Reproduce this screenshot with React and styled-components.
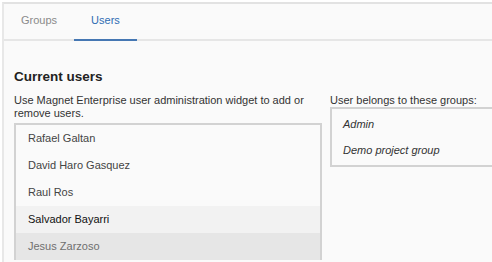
import styled, { createGlobalStyle } from 'styled-components';

const GlobalStyle = createGlobalStyle`
  body {
    margin: 0;
    background: #ffffff;
    font-family: 'Liberation Sans', Arial, sans-serif;
  }
`;

const users = [
  { id: 1, name: 'Rafael Galtan', state: 'normal' },
  { id: 2, name: 'David Haro Gasquez', state: 'normal' },
  { id: 3, name: 'Raul Ros', state: 'normal' },
  { id: 4, name: 'Salvador Bayarri', state: 'hover' },
  { id: 5, name: 'Jesus Zarzoso', state: 'selected' },
];

const groups = ['Admin', 'Demo project group'];

const rowStyles = {
  normal: { bg: '#fafafa', color: '#444444' },
  hover: { bg: '#f2f2f2', color: '#111111' },
  selected: { bg: '#e6e6e6', color: '#6f6f6f' },
};

export default function App() {
  return (
    <>
      <GlobalStyle />
      <MyFrame>
        <MyTabBar>
          <MyTab>Groups</MyTab>
          <MyTab active>Users</MyTab>
        </MyTabBar>
        <MyContent>
          <MyHeading>Current users</MyHeading>
          <MyColumns>
            <MyLeftColumn>
              <MyText>
                Use Magnet Enterprise user administration widget to add or remove users.
              </MyText>
              <MyList>
                {users.map((user) => (
                  <MyUserRow key={user.id} state={user.state}>
                    {user.name}
                  </MyUserRow>
                ))}
              </MyList>
            </MyLeftColumn>
            <MyRightColumn>
              <MyText>User belongs to these groups:</MyText>
              <MyGroupBox>
                {groups.map((group) => (
                  <MyGroupItem key={group}>{group}</MyGroupItem>
                ))}
              </MyGroupBox>
            </MyRightColumn>
          </MyColumns>
        </MyContent>
      </MyFrame>
    </>
  );
}

const MyFrame = styled.div`
  margin: 2px 0 0 2px;
  height: 260px;
  box-sizing: border-box;
  background-color: #fafafa;
  border-top: 2px solid #e2e2e2;
  border-left: 2px solid #e8e8e8;
  overflow: hidden;
`;

const MyTabBar = styled.div`
  display: flex;
  height: 35px;
  border-bottom: 2px solid #e6e6e6;
`;

const MyTab = styled.div`
  display: flex;
  align-items: center;
  padding: 0 17px 3px;
  font-size: 11px;
  color: ${({ active }) => (active ? '#2f6cb3' : '#8a8a8a')};
  border-bottom: 2px solid ${({ active }) => (active ? '#4577b3' : 'transparent')};
  margin-bottom: -2px;
  box-sizing: border-box;
`;

const MyContent = styled.div`
  padding: 28px 0 0 10px;
`;

const MyHeading = styled.h2`
  margin: 0 0 10px 0;
  font-size: 13.5px;
  font-weight: bold;
  color: #222222;
`;

const MyColumns = styled.div`
  display: flex;
  gap: 8px;
  align-items: flex-start;
`;

const MyLeftColumn = styled.div`
  width: 308px;
  flex-shrink: 0;
`;

const MyRightColumn = styled.div`
  flex: 1;
  min-width: 200px;
`;

const MyText = styled.div`
  font-size: 11px;
  line-height: 13px;
  color: #333333;
`;

const MyList = styled.div`
  margin-top: 3px;
  border: 2px solid #d2d2d2;
  border-bottom: none;
  background-color: #fafafa;
`;

const MyUserRow = styled.div`
  height: 27px;
  line-height: 27px;
  padding-left: 12px;
  font-size: 11px;
  background-color: ${({ state }) => rowStyles[state].bg};
  color: ${({ state }) => rowStyles[state].color};
`;

const MyGroupBox = styled.div`
  margin: 0 -20px 0 0;
  border: 2px solid #d2d2d2;
  border-right: none;
  padding: 2px 0;
`;

const MyGroupItem = styled.div`
  height: 26px;
  line-height: 26px;
  padding-left: 11px;
  font-size: 11px;
  font-style: italic;
  color: #333333;
`;
